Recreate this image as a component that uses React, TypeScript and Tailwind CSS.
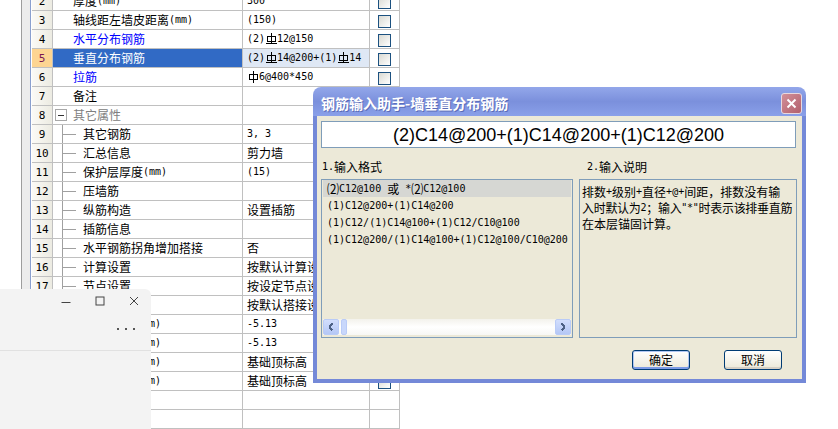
import React from "react";

type Row = {
  n: number;
  name: string;
  value?: string;
  kind?: "blue" | "sel" | "group" | "child";
  check?: boolean;
};

const rows: Row[] = [
  { n: 2, name: "厚度(mm)", value: "300", check: true },
  { n: 3, name: "轴线距左墙皮距离(mm)", value: "(150)", check: true },
  { n: 4, name: "水平分布钢筋", value: "(2)#12@150", kind: "blue", check: true },
  { n: 5, name: "垂直分布钢筋", value: "(2)#14@200+(1)#14", kind: "sel", check: true },
  { n: 6, name: "拉筋", value: "$6@400*450", kind: "blue", check: true },
  { n: 7, name: "备注", check: true },
  { n: 8, name: "其它属性", kind: "group" },
  { n: 9, name: "其它钢筋", value: "3, 3", kind: "child", check: true },
  { n: 10, name: "汇总信息", value: "剪力墙", kind: "child", check: true },
  { n: 11, name: "保护层厚度(mm)", value: "(15)", kind: "child", check: true },
  { n: 12, name: "压墙筋", kind: "child", check: true },
  { n: 13, name: "纵筋构造", value: "设置插筋", kind: "child", check: true },
  { n: 14, name: "插筋信息", kind: "child", check: true },
  { n: 15, name: "水平钢筋拐角增加搭接", value: "否", kind: "child", check: true },
  { n: 16, name: "计算设置", value: "按默认计算设置", kind: "child", check: true },
  { n: 17, name: "节点设置", value: "按设定节点设置", kind: "child", check: true },
  { n: 18, name: "搭接设置", value: "按默认搭接设置", kind: "child", check: true },
  { n: 19, name: "起点顶标高(m)", value: "-5.13", kind: "child", check: true },
  { n: 20, name: "终点顶标高(m)", value: "-5.13", kind: "child", check: true },
  { n: 21, name: "起点底标高(m)", value: "基础顶标高", kind: "child", check: true },
  { n: 22, name: "终点底标高(m)", value: "基础顶标高", kind: "child", check: true },
  { n: 23, name: "" },
  { n: 24, name: "" },
];

const WIDE = /([\u2460-\u24ff\u2e80-\u9fff\u3000-\u303f\uff00-\uffef]+)/;

// rebar grade mark: HRB (with bottom bar) or HPB
function Grade({ hrb }: { hrb?: boolean }) {
  return (
    <svg width="12" height="12" viewBox="0 0 12 12" className="inline-block shrink-0" shapeRendering="crispEdges">
      <line x1="6.5" y1="0" x2="6.5" y2={hrb ? 10 : 12} stroke="#000" />
      <rect x="2.5" y="3.5" width="8" height="5" fill="none" stroke="#000" />
      {hrb && <line x1="1" y1="10.5" x2="12" y2="10.5" stroke="#000" />}
    </svg>
  );
}

function Mix({ text }: { text: string }) {
  const parts = text.split(/([#$])/);
  return (
    <span className="inline-flex items-center whitespace-nowrap leading-none">
      {parts.map((p, i) => {
        if (p === "#") return <Grade key={i} hrb />;
        if (p === "$") return <Grade key={i} />;
        return p.split(WIDE).map((q, j) =>
          !q ? null : WIDE.test(q) ? (
            <span key={i + "-" + j} className="text-[12px]">
              {q}
            </span>
          ) : (
            <span key={i + "-" + j} className="font-['DejaVu_Sans_Mono',monospace] text-[10px] whitespace-pre">
              {q}
            </span>
          )
        );
      })}
    </span>
  );
}

function CheckBox() {
  return <div className="w-[13px] h-[13px] mt-[2px] border border-[#1c5180] bg-linear-to-br from-[#d9d9d2] to-white" />;
}

function TableRow({ row }: { row: Row }) {
  const sel = row.kind === "sel";
  const nameColor =
    row.kind === "blue" ? "text-[#0000ff]" : sel ? "bg-[#316ac5] text-white" : row.kind === "group" ? "text-[#808080]" : "";
  return (
    <div className="flex h-[19px] shrink-0">
      <div
        className={`w-[21px] shrink-0 flex items-center justify-center border-r border-b border-[#c0c0c0] ${
          sel ? "bg-[#fdd592] text-[#7b1553]" : "bg-linear-to-r from-[#fbfaf6] to-[#ecebe2]"
        }`}
      >
        <span className="font-['DejaVu_Sans_Mono',monospace] text-[11px] leading-none">{row.n}</span>
      </div>

      <div className={`w-[190px] shrink-0 flex items-stretch border-r border-b border-[#c0c0c0] overflow-hidden ${nameColor}`}>
        {row.kind === "group" ? (
          <div className="flex items-center pl-[2px]">
            <div className="w-[12px] h-[12px] border border-[#a8a8a8] bg-white flex items-center justify-center">
              <div className="w-[6px] h-px bg-[#333]" />
            </div>
            <span className="ml-[6px] text-[12px] leading-none">{row.name}</span>
          </div>
        ) : row.kind === "child" ? (
          <div className="flex items-stretch pl-[9px]">
            <div className="w-[14px] border-l border-[#a0a0a0] flex items-center">
              <div className="h-px w-full bg-[#a0a0a0]" />
            </div>
            <div className="flex items-center ml-[7px]">
              <Mix text={row.name} />
            </div>
          </div>
        ) : (
          <div className="flex items-center pl-[20px]">
            <Mix text={row.name} />
          </div>
        )}
      </div>

      <div
        className={`w-[127px] shrink-0 flex items-center pl-[4px] border-r border-b border-[#c0c0c0] overflow-hidden ${
          sel ? "bg-[#dfe8f5]" : ""
        }`}
      >
        {row.value && <Mix text={row.value} />}
      </div>

      <div className="w-[30px] shrink-0 flex items-center justify-center border-r border-b border-[#c0c0c0]">
        {row.check && <CheckBox />}
      </div>
    </div>
  );
}

function ScrollButton({ dir }: { dir: "l" | "r" }) {
  return (
    <div className="w-[16px] h-[16px] shrink-0 rounded-[2px] border border-[#b9cbf7] bg-linear-to-b from-[#d2defd] to-[#b4c7f6] flex items-center justify-center">
      <svg width="6" height="8" viewBox="0 0 6 8" shapeRendering="crispEdges">
        <path d={dir === "l" ? "M4.5 0.5L1.5 4L4.5 7.5" : "M1.5 0.5L4.5 4L1.5 7.5"} fill="none" stroke="#4d6185" strokeWidth="2" />
      </svg>
    </div>
  );
}

function Dialog() {
  return (
    <div className="absolute left-[313px] top-[87px] w-[493px] h-[296px] flex flex-col rounded-t-[8px] overflow-hidden">
      <div className="h-[29px] shrink-0 flex items-center pt-[3px] pl-[8px] pr-[4px] bg-linear-to-b from-[#93a7ea] via-[#7b90dc] to-[#8aa0e9]">
        <span className="text-white font-bold text-[14px] leading-none [text-shadow:1px_1px_0_#5b6cb8]">
          钢筋输入助手-墙垂直分布钢筋
        </span>
        <div className="ml-auto w-[21px] h-[21px] rounded-[3px] border border-[#e8d8de] bg-linear-to-br from-[#d2909a] to-[#b2606c] flex items-center justify-center">
          <svg width="11" height="11" viewBox="0 0 11 11">
            <path d="M1.5 1.5l8 8M9.5 1.5l-8 8" stroke="#fff" strokeWidth="2" />
          </svg>
        </div>
      </div>

      <div className="flex-1 flex flex-col bg-[#ece9d8] border-x-4 border-b-4 border-[#7489d8]">
        <div className="ml-[4px] mt-[5px] w-[475px] h-[27px] shrink-0 bg-white border border-[#7f9db9] flex items-center justify-center font-['Liberation_Sans',sans-serif] text-[18px] leading-none">
          (2)C14@200+(1)C14@200+(1)C12@200
        </div>

        <div className="flex gap-[6px] ml-[4px] mt-[11px] text-[12px]">
          <div className="w-[252px] flex flex-col">
            <div className="h-[16px] flex items-center pl-[1px]">
              <Mix text="1.输入格式" />
            </div>
            <div className="mt-[4px] h-[159px] border border-[#7f9db9] flex flex-col px-px">
              <div className="flex-1 flex flex-col">
                <div className="h-[17px] flex items-center pl-[4px] bg-[#d6d7d3]">
                  <Mix text="⑵C12@100 或 *⑵C12@100" />
                </div>
                <div className="h-[17px] flex items-center pl-[4px]">
                  <Mix text="(1)C12@200+(1)C14@200" />
                </div>
                <div className="h-[17px] flex items-center pl-[4px]">
                  <Mix text="(1)C12/(1)C14@100+(1)C12/C10@100" />
                </div>
                <div className="h-[17px] flex items-center pl-[4px]">
                  <Mix text="(1)C12@200/(1)C14@100+(1)C12@100/C10@200" />
                </div>
              </div>
              <div className="h-[16px] mb-[2px] flex items-center bg-linear-to-b from-[#f3f2ec] via-white to-[#f7f7f4]">
                <ScrollButton dir="l" />
                <div className="ml-[2px] w-[6px] h-[16px] rounded-[2px] border border-[#b9cbf7] bg-[#c8d7fb]" />
                <div className="flex-1" />
                <ScrollButton dir="r" />
              </div>
            </div>
          </div>

          <div className="w-[218px] flex flex-col">
            <div className="h-[16px] flex items-center pl-[8px]">
              <Mix text="2.输入说明" />
            </div>
            <div className="mt-[4px] h-[159px] border border-[#7f9db9] pt-[4px] pl-[2px] flex flex-col">
              <div className="h-[16px] flex items-center">
                <Mix text="排数+级别+直径+@+间距，排数没有输" />
              </div>
              <div className="h-[16px] flex items-center tracking-[-0.3px]">
                <Mix text={"入时默认为2；输入\"*\"时表示该排垂直筋"} />
              </div>
              <div className="h-[16px] flex items-center">
                <Mix text="在本层锚固计算。" />
              </div>
            </div>
          </div>
        </div>

        <div className="flex justify-end gap-[34px] pr-[20px] mt-[12px]">
          <div className="w-[58px] h-[20px] rounded-[3px] border border-[#003c74] bg-linear-to-b from-white to-[#ece9d8] shadow-[inset_0_-2px_0_#7d9be6,inset_0_0_0_1px_#b2c7f2] flex items-center justify-center text-[12px] leading-none">
            确定
          </div>
          <div className="w-[58px] h-[20px] rounded-[3px] border border-[#003c74] bg-linear-to-b from-white to-[#ece9d8] shadow-[inset_0_-2px_0_#d6d0c5] flex items-center justify-center text-[12px] leading-none">
            取消
          </div>
        </div>
      </div>
    </div>
  );
}

function MiniWindow() {
  return (
    <div className="absolute left-0 top-[289px] w-[151px] h-[140px] bg-[#f3f3f3] rounded-tr-[6px] flex flex-col">
      <div className="h-[24px] flex justify-end">
        <div className="w-[34px] flex items-center justify-center">
          <svg width="10" height="10" viewBox="0 0 10 10">
            <path d="M0.5 6.5h9" stroke="#444" />
          </svg>
        </div>
        <div className="w-[34px] flex items-center justify-center">
          <svg width="10" height="10" viewBox="0 0 10 10">
            <rect x="1" y="1" width="8" height="8" fill="none" stroke="#444" />
          </svg>
        </div>
        <div className="w-[34px] flex items-center justify-center">
          <svg width="10" height="10" viewBox="0 0 10 10">
            <path d="M1 1l8 8M9 1l-8 8" stroke="#444" />
          </svg>
        </div>
      </div>
      <div className="h-[37px] flex justify-end items-start pt-[15px] pr-[16px] gap-[6px]">
        <div className="w-[2px] h-[2px] bg-[#555]" />
        <div className="w-[2px] h-[2px] bg-[#555]" />
        <div className="w-[2px] h-[2px] bg-[#555]" />
      </div>
      <div className="h-px bg-[#e1e1e1]" />
    </div>
  );
}

export default function App() {
  return (
    <div className="relative w-[838px] h-[429px] overflow-hidden bg-white text-black font-['Noto_Sans_CJK_SC',sans-serif]">
      <div className="flex h-full">
        <div className="w-[21px] shrink-0" />
        <div className="w-px shrink-0 bg-[#9d9d9d]" />
        <div className="w-[8px] shrink-0 bg-[#ececec]" />
        <div className="w-px shrink-0 bg-[#8aa0cf]" />
        <div className="w-px shrink-0 bg-white" />
        <div className="flex flex-col -mt-[8px]">
          {rows.map((r) => (
            <TableRow key={r.n} row={r} />
          ))}
        </div>
      </div>
      <Dialog />
      <MiniWindow />
    </div>
  );
}
